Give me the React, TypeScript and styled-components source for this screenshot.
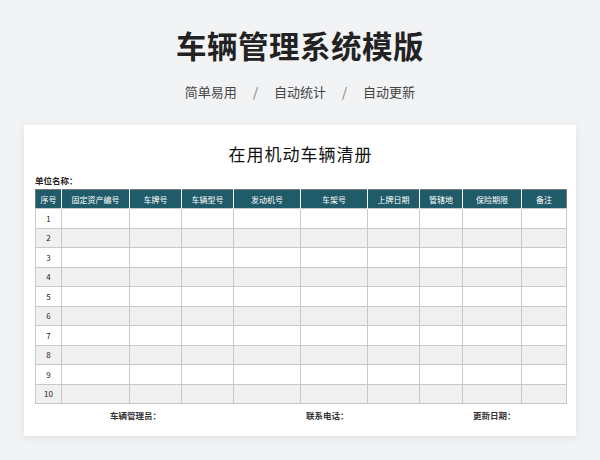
import React from "react";
import styled, { createGlobalStyle } from "styled-components";

const Global = createGlobalStyle`
  html, body { margin: 0; padding: 0; background: #f2f3f5; }
  body { font-family: "Noto Sans CJK SC", "Noto Sans", sans-serif; width: 600px; height: 460px; overflow: hidden; }
`;

const Page = styled.div`
  display: flex; flex-direction: column; align-items: center;
  padding-top: 22px;
`;
const Title = styled.h1`
  margin: 0; font-size: 30.5px; font-weight: 700; color: #222; line-height: 46px; letter-spacing: 0.5px;
`;
const Sub = styled.div`
  margin-top: 14px; display: flex; gap: 16px; font-size: 13px; color: #444; line-height: 20px;
`;
const Slash = styled.span` color: #777; `;
const Card = styled.div`
  margin-top: 23px; width: 552px; height: 311px; background: #fff;
  box-shadow: 0 2px 8px rgba(0,0,0,0.08); box-sizing: border-box; padding: 17px 10px 0 11px;
`;
const CardTitle = styled.div`
  text-align: center; font-size: 17px; color: #111; line-height: 24px; letter-spacing: 1px;
`;
const Unit = styled.div`
  margin-top: 8px; font-size: 8.5px; font-weight: 700; color: #222; line-height: 12px;
`;
const Table = styled.table`
  margin-top: 3px; border-collapse: collapse; width: 531px; table-layout: fixed;
  border: 1px solid #777;
`;
const Th = styled.th`
  background: #1f5b68; color: #fff; font-size: 8px; font-weight: 400; height: 18px; padding: 0;
  border-left: 1px solid #fff;
  &:first-child { border-left: none; }
`;
const Tr = styled.tr<{ $alt: boolean }>`
  background: ${p => (p.$alt ? "#f0f0f0" : "#fff")};
`;
const Td = styled.td`
  height: 18.5px; padding: 0; border: 1px solid #c8c8c8; font-size: 8px; text-align: center; color: #222;
`;
const Footer = styled.div`
  display: grid; grid-template-columns: 196px 167px 120px; padding-left: 75px; margin-top: 5px;
  font-size: 8.5px; font-weight: 700; color: #333;
`;

const cols: [string, number][] = [
  ["序号", 26], ["固定资产编号", 68], ["车牌号", 52], ["车辆型号", 52], ["发动机号", 67],
  ["车架号", 67], ["上牌日期", 52], ["管辖地", 43], ["保险期限", 59], ["备注", 45],
];

export default function App() {
  return (
    <>
      <Global />
      <Page>
        <Title>车辆管理系统模版</Title>
        <Sub>
          <span>简单易用</span><Slash>/</Slash><span>自动统计</span><Slash>/</Slash><span>自动更新</span>
        </Sub>
        <Card>
          <CardTitle>在用机动车辆清册</CardTitle>
          <Unit>单位名称：</Unit>
          <Table>
            <colgroup>
              {cols.map(([n, w]) => <col key={n} style={{ width: w }} />)}
            </colgroup>
            <thead>
              <tr>{cols.map(([n]) => <Th key={n}>{n}</Th>)}</tr>
            </thead>
            <tbody>
              {Array.from({ length: 10 }, (_, i) => (
                <Tr key={i} $alt={i % 2 === 1}>
                  {cols.map(([n], j) => <Td key={n}>{j === 0 ? i + 1 : ""}</Td>)}
                </Tr>
              ))}
            </tbody>
          </Table>
          <Footer>
            <span>车辆管理员：</span><span>联系电话：</span><span>更新日期：</span>
          </Footer>
        </Card>
      </Page>
    </>
  );
}
